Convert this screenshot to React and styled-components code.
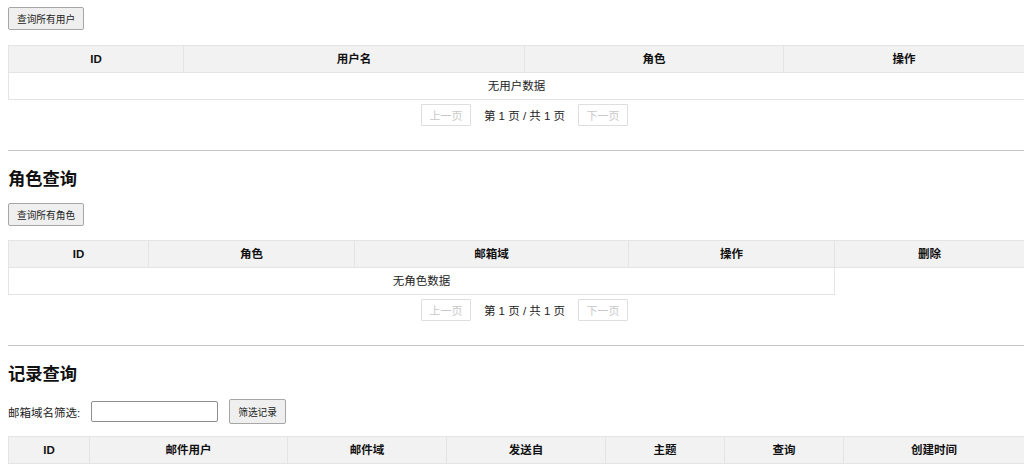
import React from "react";
import styled, { createGlobalStyle } from "styled-components";

const Global = createGlobalStyle`
  html, body { margin: 0; padding: 0; background: #fff; }
  body {
    font-family: "Liberation Sans", "Noto Sans CJK SC", sans-serif;
    color: #222;
    overflow: hidden;
  }
`;

const Page = styled.div`
  padding: 7px 0 0 8px;
  width: 1016px;
`;

const Section = styled.section`
  display: flex;
  flex-direction: column;
  align-items: flex-start;
`;

const Heading = styled.h2`
  margin: ${(p) => p.$top}px 0 0 0;
  font-size: 17.3px;
  line-height: 20px;
  font-weight: bold;
  color: #111;
`;

const Button = styled.button`
  height: 23px;
  padding: 0 8px;
  margin-top: ${(p) => p.$top || 0}px;
  background: #efefef;
  border: 1px solid #a6a6a6;
  border-radius: 2px;
  font-family: "Liberation Sans", "Noto Sans CJK SC", sans-serif;
  font-size: 9.7px;
  color: #222;
  cursor: pointer;
`;

const Table = styled.table`
  margin-top: ${(p) => p.$top}px;
  width: 1016px;
  border-collapse: collapse;
  table-layout: fixed;
  font-size: 11.5px;
`;

const Th = styled.th`
  height: 26px;
  padding: 0;
  background: #f2f2f2;
  border: 1px solid #e4e4e4;
  font-weight: bold;
  color: #111;
  text-align: center;
  vertical-align: middle;
  line-height: 14px;
`;

const Td = styled.td`
  height: 26px;
  padding: 0;
  border: 1px solid #e4e4e4;
  text-align: center;
  vertical-align: middle;
  color: #222;
  line-height: 14px;
`;

const Pager = styled.div`
  align-self: stretch;
  display: flex;
  justify-content: center;
  align-items: center;
  gap: 13px;
  margin-top: 4px;
  padding-left: 17px;
  font-size: 11.5px;
  color: #222;
`;

const PagerButton = styled.button`
  width: 50px;
  height: 22px;
  padding: 0;
  background: #fff;
  border: 1px solid #dedede;
  border-radius: 1px;
  color: #c8c8c8;
  font-family: "Liberation Sans", "Noto Sans CJK SC", sans-serif;
  font-size: 11px;
`;

const Rule = styled.hr`
  align-self: stretch;
  margin: ${(p) => p.$top}px 0 0 0;
  border: 0;
  border-top: 1px solid #c4c4c4;
  height: 0;
`;

const FilterRow = styled.div`
  display: flex;
  align-items: center;
  margin-top: 15px;
  font-size: 11.5px;
  color: #222;
`;

const Label = styled.label`
  margin-right: 11px;
`;

const Input = styled.input`
  width: 127px;
  height: 21px;
  box-sizing: border-box;
  border: 1px solid #8f8f8f;
  border-radius: 2px;
  padding: 0 4px;
  margin-right: 11px;
`;

const FilterButton = styled(Button)`
  height: 25px;
  padding: 0 8px;
`;

function DataTable({ top, cols, empty, span }) {
  return (
    <Table $top={top}>
      <colgroup>
        {cols.map((c) => (
          <col key={c.name} style={{ width: c.w }} />
        ))}
      </colgroup>
      <thead>
        <tr>
          {cols.map((c) => (
            <Th key={c.name}>{c.name}</Th>
          ))}
        </tr>
      </thead>
      {empty && (
        <tbody>
          <tr>
            <Td colSpan={span}>{empty}</Td>
          </tr>
        </tbody>
      )}
    </Table>
  );
}

function Pagination() {
  return (
    <Pager>
      <PagerButton disabled>上一页</PagerButton>
      <span>第 1 页 / 共 1 页</span>
      <PagerButton disabled>下一页</PagerButton>
    </Pager>
  );
}

const userCols = [
  { name: "ID", w: 175 },
  { name: "用户名", w: 341 },
  { name: "角色", w: 259 },
  { name: "操作", w: 241 },
];

const roleCols = [
  { name: "ID", w: 140 },
  { name: "角色", w: 206 },
  { name: "邮箱域", w: 274 },
  { name: "操作", w: 206 },
  { name: "删除", w: 190 },
];

const recordCols = [
  { name: "ID", w: 81 },
  { name: "邮件用户", w: 198 },
  { name: "邮件域", w: 159 },
  { name: "发送自", w: 159 },
  { name: "主题", w: 119 },
  { name: "查询", w: 119 },
  { name: "创建时间", w: 181 },
];

export default function App() {
  return (
    <>
      <Global />
      <Page>
        <Section>
          <Button>查询所有用户</Button>
          <DataTable top={15} cols={userCols} empty="无用户数据" span={4} />
          <Pagination />
          <Rule $top={24} />
        </Section>
        <Section>
          <Heading $top={18}>角色查询</Heading>
          <Button $top={14}>查询所有角色</Button>
          <DataTable top={14} cols={roleCols} empty="无角色数据" span={4} />
          <Pagination />
          <Rule $top={24} />
        </Section>
        <Section>
          <Heading $top={18}>记录查询</Heading>
          <FilterRow>
            <Label>邮箱域名筛选:</Label>
            <Input type="text" />
            <FilterButton>筛选记录</FilterButton>
          </FilterRow>
          <DataTable top={12} cols={recordCols} />
        </Section>
      </Page>
    </>
  );
}
